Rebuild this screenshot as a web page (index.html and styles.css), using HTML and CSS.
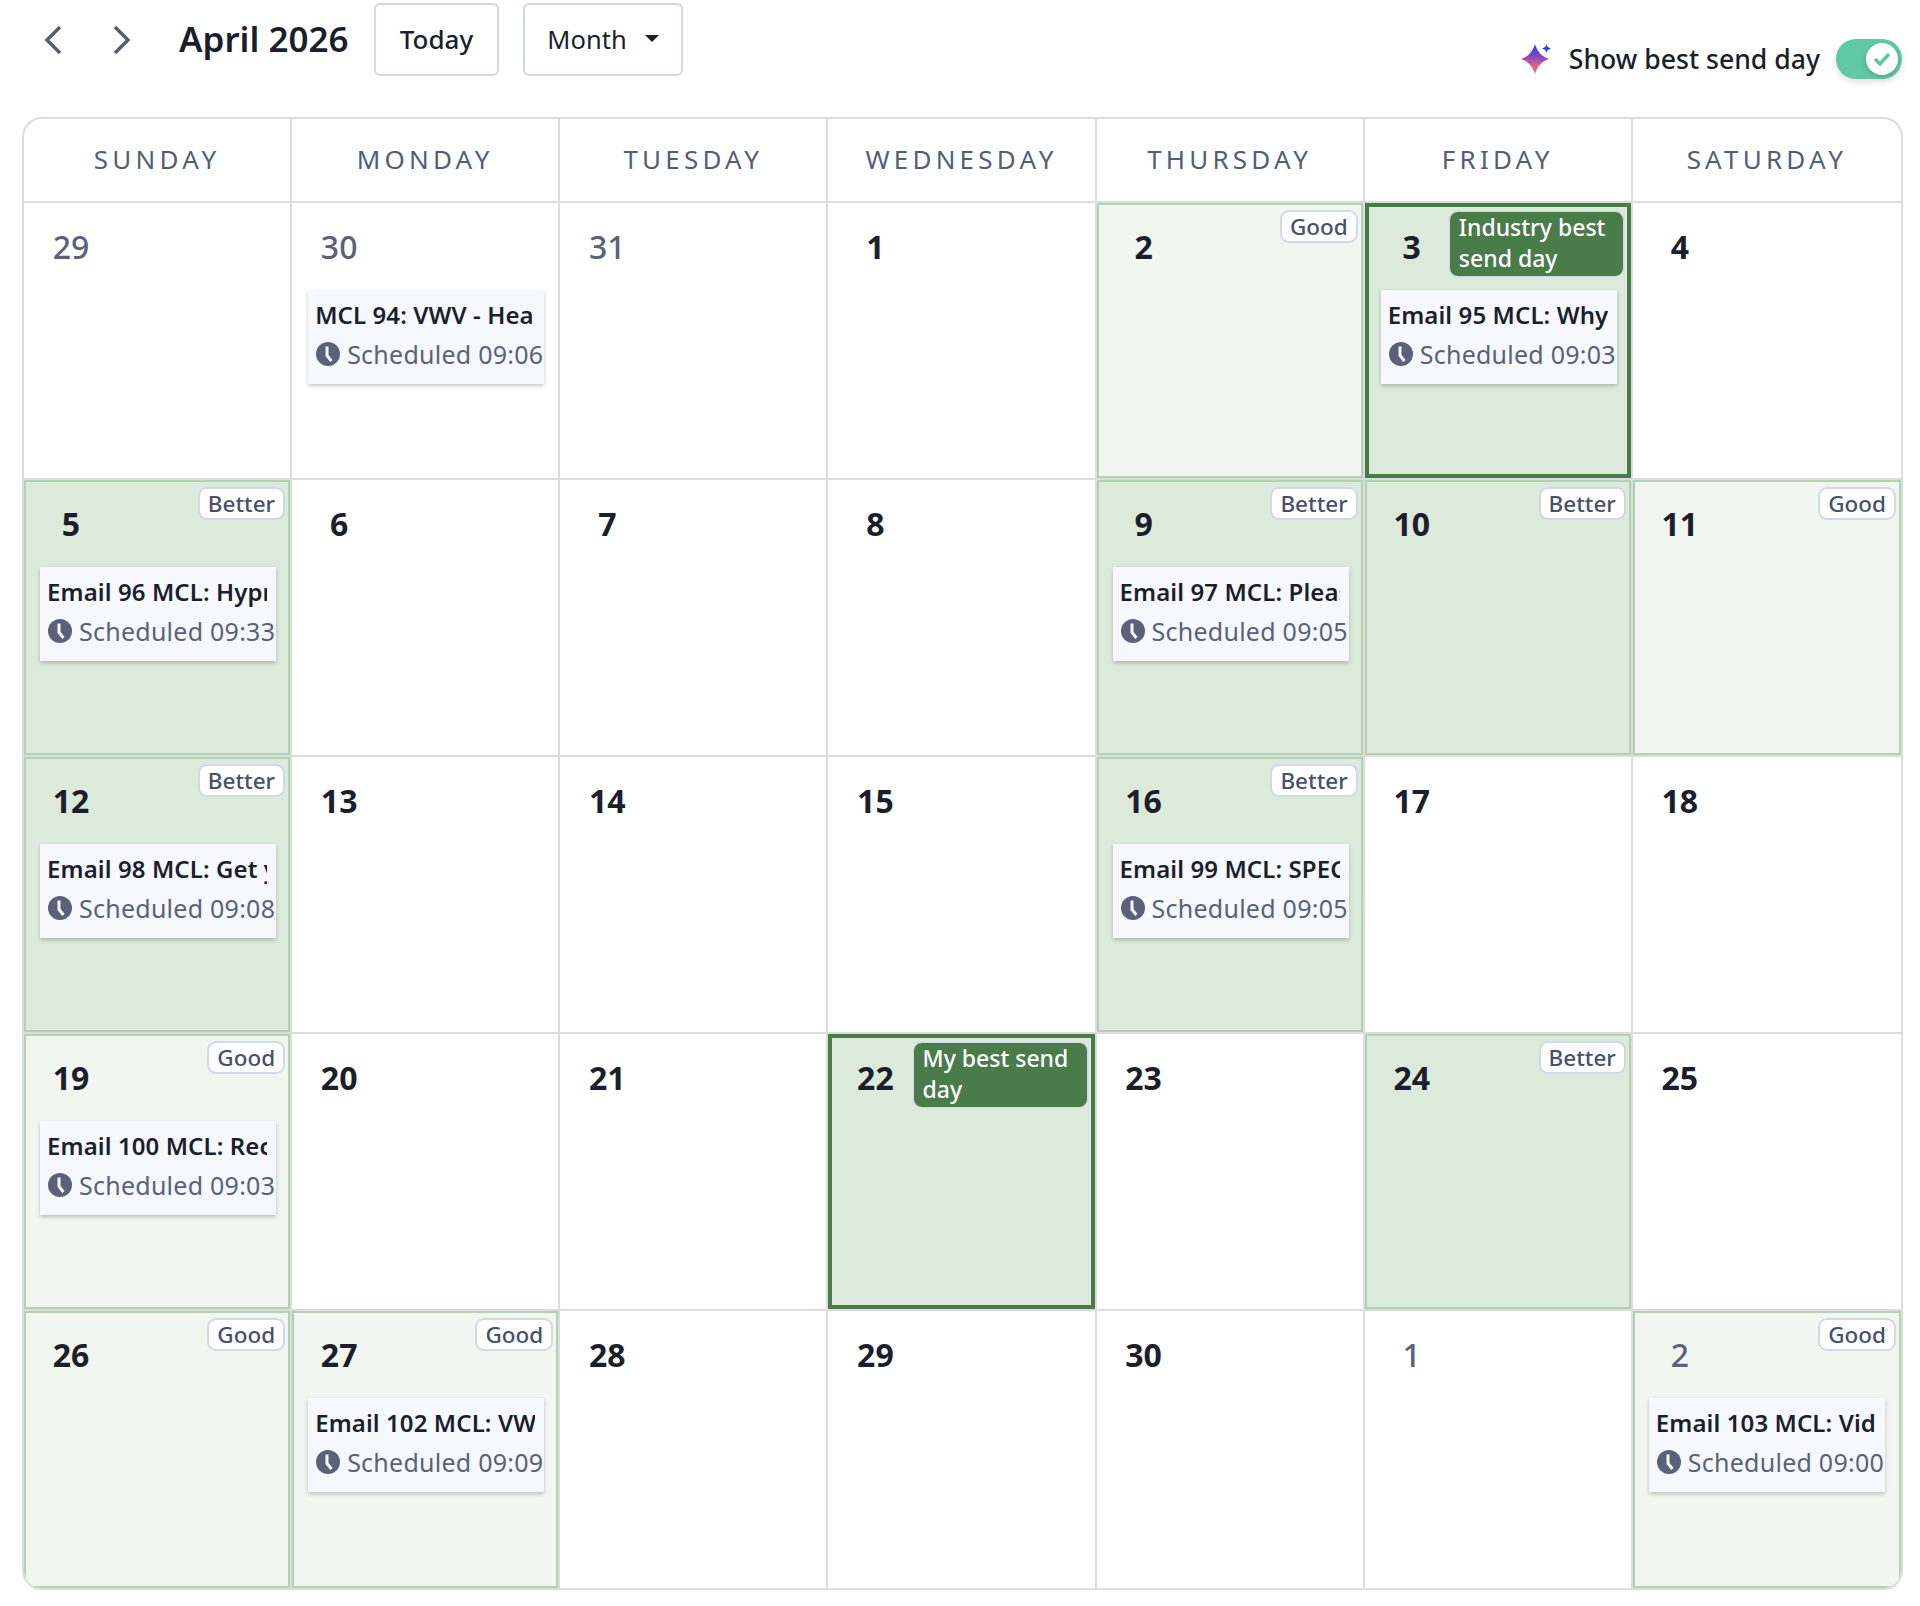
FILE: index.html
```html
<!DOCTYPE html>
<html lang="en">
<head>
    <meta charset="UTF-8">
    <title>Calendar</title>
    <link rel="stylesheet" href="styles.css">
</head>
<body>
    <svg class="defs" width="0" height="0" aria-hidden="true">
        <defs>
            <symbol id="clock" viewBox="0 0 24 24">
                <circle cx="12" cy="12" r="12" fill="#5a6178"/>
                <path d="M11 4.500V13.500l4.500 5.500" fill="none" stroke="#f7f8fe" stroke-width="3"/>
            </symbol>
            <linearGradient id="spark" x1="0" y1="0" x2="0" y2="1">
                <stop offset="0" stop-color="#2540f0"/>
                <stop offset="0.4" stop-color="#7f48c0"/>
                <stop offset="0.75" stop-color="#e8608f"/>
            </linearGradient>
        </defs>
    </svg>

    <div class="toolbar">
        <button class="nav-btn" aria-label="Previous">
            <svg width="18" height="30" viewBox="0 0 18 30"><path d="M16 2 3 15l13 13" fill="none" stroke="#555d75" stroke-width="3.400"/></svg>
        </button>
        <button class="nav-btn next" aria-label="Next">
            <svg width="18" height="30" viewBox="0 0 18 30"><path d="M2 2l13 13L2 28" fill="none" stroke="#555d75" stroke-width="3.400"/></svg>
        </button>
        <h1 class="title">April 2026</h1>
        <button class="btn today">Today</button>
        <button class="btn month">Month <span class="caret"></span></button>
        <div class="best-send">
            <svg class="sparkle" width="32" height="30" viewBox="0 0 32 30">
                <path d="M14 0C16 7 21 13 28 15 21 17 16 23 14 30 12 23 7 17 0 15 7 13 12 7 14 0z" fill="url(#spark)"/>
                <path d="M25.500 0c.5 2.700 1.500 3.700 4.500 4.500-3 .8-4 1.800-4.500 4.500-.5-2.700-1.500-3.700-4.500-4.500 3-.8 4-1.800 4.500-4.500z" fill="#2440f0"/>
            </svg>
            <span class="best-label">Show best send day</span>
            <div class="toggle">
                <div class="thumb">
                    <svg width="18" height="14" viewBox="0 0 18 14"><path d="M2 7l5 5 9-10" fill="none" stroke="#5fc8a4" stroke-width="3.400"/></svg>
                </div>
            </div>
        </div>
    </div>

    <div class="calendar">
        <div class="head">Sunday</div>
        <div class="head">Monday</div>
        <div class="head">Tuesday</div>
        <div class="head">Wednesday</div>
        <div class="head">Thursday</div>
        <div class="head">Friday</div>
        <div class="head last">Saturday</div>

        <!-- week 1 -->
        <div class="cell"><div class="date muted">29</div></div>
        <div class="cell">
            <div class="date muted">30</div>
            <div class="chip">
                <div class="chip-title">MCL 94: VWV - Health check</div>
                <div class="chip-time"><svg class="clock"><use href="#clock"/></svg>Scheduled 09:06</div>
            </div>
        </div>
        <div class="cell"><div class="date muted">31</div></div>
        <div class="cell"><div class="date">1</div></div>
        <div class="cell good"><div class="date">2</div><span class="badge">Good</span></div>
        <div class="cell best">
            <div class="date">3</div>
            <span class="badge dark">Industry best send day</span>
            <div class="chip">
                <div class="chip-title">Email 95 MCL: Why you should</div>
                <div class="chip-time"><svg class="clock"><use href="#clock"/></svg>Scheduled 09:03</div>
            </div>
        </div>
        <div class="cell last"><div class="date">4</div></div>

        <!-- week 2 -->
        <div class="cell better">
            <div class="date">5</div><span class="badge">Better</span>
            <div class="chip">
                <div class="chip-title">Email 96 MCL: Hypnosis for you</div>
                <div class="chip-time"><svg class="clock"><use href="#clock"/></svg>Scheduled 09:33</div>
            </div>
        </div>
        <div class="cell"><div class="date">6</div></div>
        <div class="cell"><div class="date">7</div></div>
        <div class="cell"><div class="date">8</div></div>
        <div class="cell better">
            <div class="date">9</div><span class="badge">Better</span>
            <div class="chip">
                <div class="chip-title">Email 97 MCL: Please read this</div>
                <div class="chip-time"><svg class="clock"><use href="#clock"/></svg>Scheduled 09:05</div>
            </div>
        </div>
        <div class="cell better"><div class="date">10</div><span class="badge">Better</span></div>
        <div class="cell good last"><div class="date">11</div><span class="badge">Good</span></div>

        <!-- week 3 -->
        <div class="cell better">
            <div class="date">12</div><span class="badge">Better</span>
            <div class="chip">
                <div class="chip-title">Email 98 MCL: Get your copy</div>
                <div class="chip-time"><svg class="clock"><use href="#clock"/></svg>Scheduled 09:08</div>
            </div>
        </div>
        <div class="cell"><div class="date">13</div></div>
        <div class="cell"><div class="date">14</div></div>
        <div class="cell"><div class="date">15</div></div>
        <div class="cell better">
            <div class="date">16</div><span class="badge">Better</span>
            <div class="chip">
                <div class="chip-title">Email 99 MCL: SPECIAL offer</div>
                <div class="chip-time"><svg class="clock"><use href="#clock"/></svg>Scheduled 09:05</div>
            </div>
        </div>
        <div class="cell"><div class="date">17</div></div>
        <div class="cell last"><div class="date">18</div></div>

        <!-- week 4 -->
        <div class="cell good">
            <div class="date">19</div><span class="badge">Good</span>
            <div class="chip">
                <div class="chip-title">Email 100 MCL: Recent news</div>
                <div class="chip-time"><svg class="clock"><use href="#clock"/></svg>Scheduled 09:03</div>
            </div>
        </div>
        <div class="cell"><div class="date">20</div></div>
        <div class="cell"><div class="date">21</div></div>
        <div class="cell best"><div class="date">22</div><span class="badge dark">My best send day</span></div>
        <div class="cell"><div class="date">23</div></div>
        <div class="cell better"><div class="date">24</div><span class="badge">Better</span></div>
        <div class="cell last"><div class="date">25</div></div>

        <!-- week 5 -->
        <div class="cell good bottom"><div class="date">26</div><span class="badge">Good</span></div>
        <div class="cell good bottom">
            <div class="date">27</div><span class="badge">Good</span>
            <div class="chip">
                <div class="chip-title">Email 102 MCL: VWV update</div>
                <div class="chip-time"><svg class="clock"><use href="#clock"/></svg>Scheduled 09:09</div>
            </div>
        </div>
        <div class="cell bottom"><div class="date">28</div></div>
        <div class="cell bottom"><div class="date">29</div></div>
        <div class="cell bottom"><div class="date">30</div></div>
        <div class="cell bottom"><div class="date muted">1</div></div>
        <div class="cell good bottom last">
            <div class="date muted">2</div><span class="badge">Good</span>
            <div class="chip">
                <div class="chip-title">Email 103 MCL: Video for you</div>
                <div class="chip-time"><svg class="clock"><use href="#clock"/></svg>Scheduled 09:00</div>
            </div>
        </div>
    </div>
</body>
</html>
```

FILE: styles.css
```css
* {
    box-sizing: border-box;
}
body {
    margin: 0;
    background-color: #fff;
    color: #1c1f2b;
    font-family: "Noto Sans", Arial, sans-serif;
}
.defs {
    position: absolute;
}
.toolbar {
    display: flex;
    align-items: flex-start;
    height: 117px;
    padding: 3px 18px 0 44px;
}
.nav-btn {
    width: 18px;
    height: 30px;
    margin-top: 22px;
    padding: 0;
    border: none;
    background: none;
}
.nav-btn.next {
    margin-left: 51px;
}
.title {
    flex: 0 0 195px;
    margin: 11px 0 0 48px;
    font-size: 35px;
    line-height: 50px;
    font-weight: 600;
    white-space: nowrap;
}
.btn {
    display: flex;
    align-items: center;
    justify-content: center;
    height: 73px;
    padding: 0 0 2px;
    border: 2px solid #d3d8e8;
    border-radius: 6px;
    background-color: #fff;
    color: #1c1f2b;
    font-family: inherit;
    font-size: 26px;
}
.today {
    width: 125px;
    margin-right: 24px;
    font-weight: 500;
}
.month {
    width: 160px;
    gap: 18px;
    font-size: 25.5px;
}
.caret {
    width: 0;
    height: 0;
    border-left: 7px solid transparent;
    border-right: 7px solid transparent;
    border-top: 7px solid #1c1f2b;
}
.best-send {
    display: flex;
    align-items: center;
    margin-top: 36px;
    margin-left: auto;
}
.sparkle {
    margin-right: 16px;
}
.best-label {
    margin-right: 16px;
    font-size: 26.6px;
    font-weight: 500;
}
.toggle {
    display: flex;
    align-items: center;
    justify-content: flex-end;
    width: 66px;
    height: 40px;
    padding-right: 4px;
    border-radius: 20px;
    background-color: #5fc8a4;
    box-shadow: 0 3px 6px rgba(0, 0, 0, 0.12);
}
.thumb {
    display: flex;
    align-items: center;
    justify-content: center;
    width: 32px;
    height: 32px;
    border-radius: 50%;
    background-color: #fff;
    box-shadow: 0 2px 5px rgba(0, 0, 0, 0.18);
}
.calendar {
    display: grid;
    grid-template-columns: repeat(7, 1fr);
    grid-template-rows: 84px repeat(5, 277px);
    width: 1881px;
    margin-left: 22px;
    border: 2px solid #dcdcdc;
    border-radius: 20px;
    overflow: hidden;
}
.head {
    display: flex;
    align-items: center;
    justify-content: center;
    padding-bottom: 3px;
    border-right: 2px solid #dcdcdc;
    border-bottom: 2px solid #dcdcdc;
    color: #555d75;
    font-size: 26px;
    letter-spacing: 4.2px;
    text-transform: uppercase;
}
.cell {
    position: relative;
    min-width: 0;
    border-right: 2px solid #dcdcdc;
    border-bottom: 2px solid #dcdcdc;
}
.last {
    border-right: none;
}
.bottom {
    border-bottom: none;
}
.good {
    background-color: #f1f6f0;
    box-shadow: inset 0 0 0 2px #b3d1b3;
}
.better {
    background-color: #dbeada;
    box-shadow: inset 0 0 0 2px #b3d1b3;
}
.best {
    background-color: #dbeada;
    box-shadow: inset 0 0 0 4px #4a7c4a;
}
.date {
    width: 48px;
    height: 40px;
    margin: 24px 0 0 23px;
    font-size: 32px;
    line-height: 40px;
    font-weight: 700;
    text-align: center;
}
.date.muted {
    color: #5a6178;
    font-weight: 500;
}
.badge {
    position: absolute;
    top: 7px;
    right: 5px;
    padding: 0 8px;
    border: 2px solid #d3d8e8;
    border-radius: 9px;
    background-color: #fff;
    color: #4a506a;
    font-size: 22.5px;
    line-height: 29px;
    font-weight: 500;
}
.badge.dark {
    top: 8px;
    right: 7px;
    width: 175px;
    padding: 0 9px 2px;
    border-width: 1px;
    background-color: #4a7c4a;
    color: #fff;
    font-size: 23px;
    line-height: 31px;
}
.chip {
    width: 236px;
    height: 94px;
    margin: 23px 0 0 16px;
    padding: 6px 0 0 7px;
    background-color: #f7f8fe;
    box-shadow: 0 2px 4px rgba(0, 0, 0, 0.22);
}
.chip-title {
    width: 220px;
    overflow: hidden;
    font-size: 24px;
    line-height: 38px;
    font-weight: 600;
    letter-spacing: 0.1px;
    white-space: nowrap;
}
.chip-time {
    display: flex;
    align-items: center;
    margin-top: 1px;
    color: #5a6178;
    font-size: 25px;
    line-height: 38px;
    letter-spacing: 0.25px;
    white-space: nowrap;
}
.clock {
    flex-shrink: 0;
    width: 24px;
    height: 24px;
    margin: 0 7px 0 1px;
}
```
